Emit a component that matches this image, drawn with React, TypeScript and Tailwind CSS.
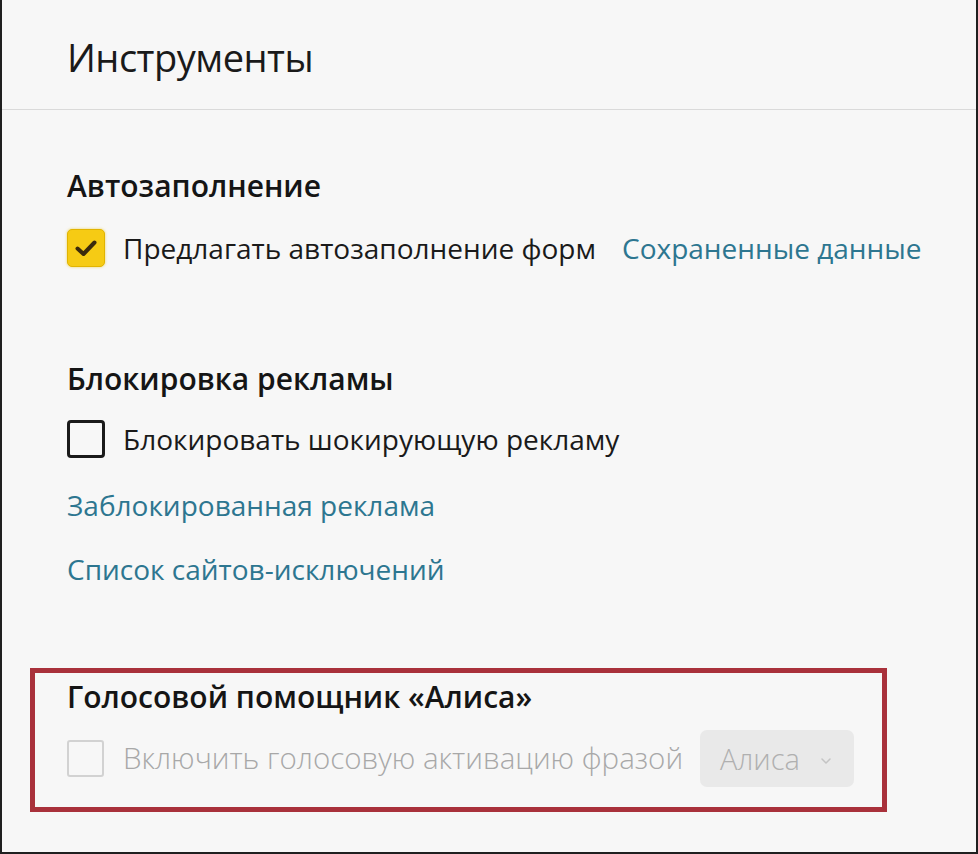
import React from "react";

const font = { fontFamily: '"Open Sans", "Noto Sans", sans-serif' };

function Check() {
  return (
    <div className="w-[38px] h-[38px] rounded-[5px] bg-[#f6cb14] border border-[#e2b400] flex items-center justify-center shadow-[0_0_3px_rgba(230,190,0,0.6)]">
      <svg width="24" height="20" viewBox="0 0 24 20">
        <path d="M3.5 10.5 L9.5 16 L20.5 4.5" fill="none" stroke="#3b2a0c" strokeWidth="4" strokeLinecap="round" strokeLinejoin="round" />
      </svg>
    </div>
  );
}

export default function App() {
  return (
    <div style={font} className="w-[978px] h-[854px] bg-[#f7f7f7] border-l-2 border-r-2 border-b-2 border-[#1f1f1f] flex flex-col overflow-hidden">
      <div className="h-[110px] shrink-0 border-b border-[#dadada] pl-[65px] pt-[5px] flex items-center">
        <span className="text-[38px] leading-none tracking-[-0.5px] text-[#1a1a1a] font-normal">Инструменты</span>
      </div>

      <div className="pl-[65px] flex flex-col">
        <div className="mt-[55px] h-[40px] flex items-center text-[30px] font-semibold text-[#151515]">Автозаполнение</div>
        <div className="mt-[23px] h-[40px] flex items-center gap-[18px]">
          <Check />
          <span className="text-[28px] text-[#1a1a1a]">Предлагать автозаполнение форм</span>
          <span className="ml-[8px] text-[28px] text-[#2d7690]">Сохраненные данные</span>
        </div>

        <div className="mt-[90px] h-[40px] flex items-center text-[30px] font-semibold text-[#151515]">Блокировка рекламы</div>
        <div className="mt-[21px] h-[40px] flex items-center gap-[18px]">
          <div className="w-[38px] h-[38px] rounded-[4px] border-[3px] border-[#1a1a1a]" />
          <span className="text-[28px] text-[#1a1a1a]">Блокировать шокирующую рекламу</span>
        </div>
        <div className="mt-[26px] h-[40px] flex items-center text-[28px] text-[#2d7690]">Заблокированная реклама</div>
        <div className="mt-[24px] h-[40px] flex items-center text-[28px] text-[#2d7690]">Список сайтов-исключений</div>
      </div>

      <div className="mt-[79px] ml-[28px] w-[857px] border-[5px] border-[#a9313b] pl-[32px] pt-[3px] pb-[20px] flex flex-col">
        <div className="h-[40px] flex items-center text-[30px] font-semibold text-[#151515]">Голосовой помощник «Алиса»</div>
        <div className="mt-[14px] h-[57px] flex items-center">
          <div className="w-[37px] h-[37px] rounded-[3px] border-2 border-[#d2d2d2]" />
          <span className="ml-[19px] text-[29.5px] font-light text-[#a8a8a8]">Включить голосовую активацию фразой</span>
          <div className="ml-[17px] w-[154px] h-[57px] rounded-[7px] bg-[#e9e9e9] flex items-center pl-[20px]">
            <span className="text-[29px] font-light text-[#b0b0b0]">Алиса</span>
            <svg className="ml-[20px] mt-[4px]" width="12" height="8" viewBox="0 0 12 8">
              <path d="M2 2 L6 6 L10 2" fill="none" stroke="#c4c4c4" strokeWidth="1.5" strokeLinecap="round" />
            </svg>
          </div>
        </div>
      </div>
    </div>
  );
}
